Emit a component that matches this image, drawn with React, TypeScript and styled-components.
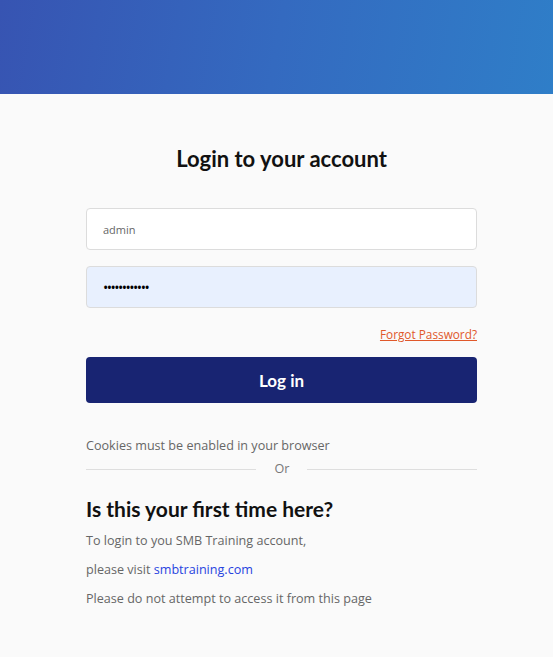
import React from "react";
import styled, { createGlobalStyle } from "styled-components";

const GlobalStyle = createGlobalStyle`
  html, body {
    margin: 0;
    padding: 0;
    background: #fafafa;
  }
  body {
    font-family: "Open Sans", "Liberation Sans", sans-serif;
  }
`;

const Page = styled.div`
  min-height: 657px;
  background: #fafafa;
`;

const Header = styled.header`
  height: 94px;
  background: linear-gradient(100deg, #3754b2 0%, #346ac0 50%, #2f7ec8 100%);
`;

const Content = styled.main`
  width: 391px;
  margin-left: 86px;
  padding-top: 52px;
  display: flex;
  flex-direction: column;
`;

const Title = styled.h1`
  margin: 0 0 36px;
  text-align: center;
  font-family: "Lato", "Noto Sans", sans-serif;
  font-size: 22px;
  font-weight: 700;
  color: #111;
  line-height: 26px;
`;

const Input = styled.input<{ $filled?: boolean }>`
  box-sizing: border-box;
  width: 100%;
  height: 42px;
  margin: 0 0 16px;
  padding: 0 16px;
  border: 1px solid #dcdcdc;
  border-radius: 4px;
  background: ${(p) => (p.$filled ? "#e8f0fe" : "#fff")};
  font-family: "Open Sans", "Liberation Sans", sans-serif;
  font-size: ${(p) => (p.$filled ? "14px" : "11px")};
  color: ${(p) => (p.$filled ? "#000" : "#666")};
  outline: none;
  letter-spacing: ${(p) => (p.$filled ? "-1.5px" : "0")};
`;

const ForgotRow = styled.div`
  display: flex;
  justify-content: flex-end;
  margin: 1px 0 14px;
`;

const ForgotLink = styled.a`
  font-size: 11.8px;
  line-height: 18px;
  color: #e0582a;
  text-decoration: underline;
`;

const LoginButton = styled.button`
  height: 46px;
  width: 100%;
  border: none;
  border-radius: 4px;
  background: #182472;
  color: #fff;
  font-family: "Lato", "Noto Sans", sans-serif;
  font-size: 17px;
  font-weight: 700;
`;

const Note = styled.p`
  margin: 34px 0 0;
  font-size: 12.6px;
  line-height: 18px;
  color: #666;
`;

const Divider = styled.div`
  display: flex;
  align-items: center;
  gap: 18px;
  margin-top: 5px;
  font-size: 12.6px;
  line-height: 18px;
  color: #777;

  &::before,
  &::after {
    content: "";
    flex: 1;
    height: 1px;
    background: #dedede;
  }
  &::before {
    margin-right: 1px;
  }
`;

const SubTitle = styled.h2`
  margin: 18px 0 10px;
  font-family: "Lato", "Noto Sans", sans-serif;
  font-size: 21px;
  font-weight: 700;
  color: #111;
  line-height: 26px;
`;

const InfoLine = styled.p`
  margin: 0 0 11px;
  font-size: 12.6px;
  line-height: 18px;
  color: #666;
`;

const SiteLink = styled.a`
  color: #2743e0;
  text-decoration: none;
`;

export default function App() {
  return (
    <Page>
      <GlobalStyle />
      <Header />
      <Content>
        <Title>Login to your account</Title>
        <Input defaultValue="admin" />
        <Input $filled type="password" defaultValue="adminadmin12" />
        <ForgotRow>
          <ForgotLink href="#">Forgot Password?</ForgotLink>
        </ForgotRow>
        <LoginButton>Log in</LoginButton>
        <Note>Cookies must be enabled in your browser</Note>
        <Divider>Or</Divider>
        <SubTitle>Is this your first time here?</SubTitle>
        <InfoLine>To login to you SMB Training account,</InfoLine>
        <InfoLine>
          please visit <SiteLink href="#">smbtraining.com</SiteLink>
        </InfoLine>
        <InfoLine>Please do not attempt to access it from this page</InfoLine>
      </Content>
    </Page>
  );
}
